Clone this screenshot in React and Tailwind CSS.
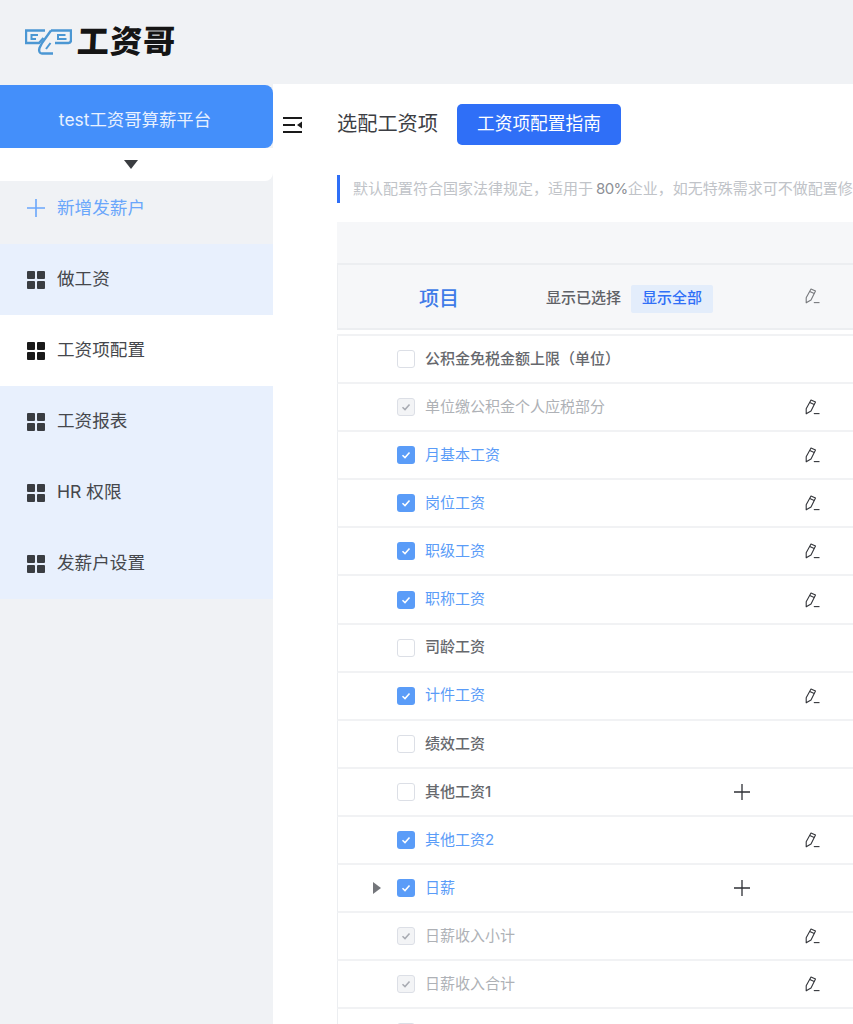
import React from 'react';

const FONT = { fontFamily: 'Inter, "Noto Sans CJK SC", sans-serif' };

const menus = [
  { label: '做工资' },
  { label: '工资项配置', active: true },
  { label: '工资报表' },
  { label: 'HR 权限' },
  { label: '发薪户设置' },
];

const rows = [
  { id: 1, label: '公积金免税金额上限（单位）', state: 'off' },
  { id: 2, label: '单位缴公积金个人应税部分', state: 'disabled', edit: true },
  { id: 3, label: '月基本工资', state: 'on', edit: true },
  { id: 4, label: '岗位工资', state: 'on', edit: true },
  { id: 5, label: '职级工资', state: 'on', edit: true },
  { id: 6, label: '职称工资', state: 'on', edit: true },
  { id: 7, label: '司龄工资', state: 'off' },
  { id: 8, label: '计件工资', state: 'on', edit: true },
  { id: 9, label: '绩效工资', state: 'off' },
  { id: 10, label: '其他工资1', state: 'off', add: true },
  { id: 11, label: '其他工资2', state: 'on', edit: true },
  { id: 12, label: '日薪', state: 'on', add: true, expand: true },
  { id: 13, label: '日薪收入小计', state: 'disabled', edit: true },
  { id: 14, label: '日薪收入合计', state: 'disabled', edit: true },
  { id: 15, label: '', state: 'disabled' },
];

const Logo = () => (
  <svg width="47" height="26" viewBox="0 0 47 26" fill="none" stroke="#4b97d3" strokeWidth="2.4">
    <path d="M20 1.5H1V14H14L18.5 9" />
    <path d="M13 6H6.5V10H11" strokeWidth="2" />
    <path d="M26 1.5H46V11C46 13 45 14 43.5 14H30" />
    <path d="M40.5 6H33V10H41.5" strokeWidth="2" />
    <path d="M26 1.5L17 14L14.5 19C13.5 22 14.5 24.5 17 24.5H28" />
    <path d="M25.5 14L21 20" strokeWidth="2" />
  </svg>
);

const GridIcon = ({ active }) => (
  <div className="grid grid-cols-2 gap-[2px] w-[18px] h-[18px]">
    {[0, 1, 2, 3].map((i) => (
      <span key={i} className={`rounded-[1px] ${active ? 'bg-[#1a1a1a]' : 'bg-[#3a3d42]'}`} />
    ))}
  </div>
);

const Pencil = ({ light }) => (
  <svg width="15" height="16" viewBox="0 0 15 16" fill="none" stroke={light ? '#77797d' : '#33353a'} strokeWidth="1.1">
    <path d="M6 1L10.5 3L6 12L1.2 14.8L1.2 9.8Z" strokeLinejoin="round" />
    <path d="M4.8 3.6L9.2 5.5" />
    <path d="M8.8 14.6H14.5" />
  </svg>
);

const Check = ({ color }) => (
  <svg width="12" height="12" viewBox="0 0 12 12" fill="none" stroke={color} strokeWidth="1.5">
    <path d="M2.5 6.2L5 8.6L9.5 3.4" />
  </svg>
);

const Checkbox = ({ state }) => {
  if (state === 'on') {
    return (
      <div className="w-[18px] h-[18px] rounded-[3px] bg-[#5a9cf8] flex items-center justify-center">
        <Check color="#ffffff" />
      </div>
    );
  }
  if (state === 'disabled') {
    return (
      <div className="w-[18px] h-[18px] rounded-[3px] bg-[#f3f4f6] border border-[#dcdfe6] flex items-center justify-center">
        <Check color="#a8abb2" />
      </div>
    );
  }
  return <div className="w-[18px] h-[18px] rounded-[3px] bg-white border border-[#dcdfe6]" />;
};

const labelColor = {
  on: 'text-[#5a9cf8]',
  off: 'text-[#66686d] font-medium',
  disabled: 'text-[#aeb1b6]',
};

const Row = ({ row }) => (
  <div className="grid grid-cols-[59px_28px_308px_72px_auto] items-center h-[48.1px] shrink-0 border-b-2 border-[#f1f2f4] border-l border-l-[#eceef1] box-border">
    <div className="flex justify-end pr-[16px]">
      {row.expand && <div className="w-0 h-0 border-y-[6px] border-y-transparent border-l-[8px] border-l-[#74767b]" />}
    </div>
    <Checkbox state={row.state} />
    <div className={`text-[15px] whitespace-nowrap ${labelColor[row.state]}`}>{row.label}</div>
    <div>
      {row.add && (
        <svg width="18" height="18" viewBox="0 0 18 18" stroke="#2f3136" strokeWidth="1.3">
          <path d="M9 1V17M1 9H17" />
        </svg>
      )}
    </div>
    <div>{row.edit && <Pencil />}</div>
  </div>
);

export default function App() {
  return (
    <div className="w-[853px] h-[1024px] overflow-hidden bg-[#f0f2f5] flex flex-col" style={FONT}>
      <header className="h-[84px] shrink-0 flex items-center pl-[25px] gap-[5px]">
        <Logo />
        <span className="text-[32px] leading-none font-black text-[#151515] -skew-x-3 tracking-[1px]">工资哥</span>
      </header>
      <div className="flex flex-1 min-h-0">
        <aside className="w-[273px] shrink-0">
          <div className="mt-[1px] h-[63px] rounded-r-lg bg-[#448ffa] flex items-center justify-center pt-[8px] pr-[3px] text-[17.4px] text-[#e8f1ff]">
            test工资哥算薪平台
          </div>
          <div className="h-[33px] rounded-br-lg bg-white flex justify-center pt-[12px] pr-[12px]">
            <div className="w-0 h-0 border-x-[7px] border-x-transparent border-t-[9px] border-t-[#3a3c40]" />
          </div>
          <div className="h-[63px] flex items-center pb-[9px] pl-[27px] gap-[12px] text-[17.6px] text-[#6aa6fb]">
            <svg width="18" height="18" viewBox="0 0 18 18" stroke="#6aa6fb" strokeWidth="1.6">
              <path d="M9 0V18M0 9H18" />
            </svg>
            新增发薪户
          </div>
          {menus.map((m) => (
            <div
              key={m.label}
              className={`h-[71px] flex items-center pl-[27px] gap-[12px] text-[17.6px] text-[#45474c] ${m.active ? 'bg-white' : 'bg-[#e8f0fd]'}`}
            >
              <GridIcon active={m.active} />
              {m.label}
            </div>
          ))}
        </aside>
        <main className="flex-1 min-w-0 bg-white flex">
          <div className="w-[64px] shrink-0 pt-[33px] pl-[10px]">
            <svg width="19" height="16" viewBox="0 0 19 16" fill="#1a1a1a">
              <rect x="0" y="0" width="19" height="2" />
              <rect x="0" y="7" width="12" height="2" />
              <rect x="0" y="14" width="19" height="2" />
              <path d="M19 4.5V11.5L14 8Z" />
            </svg>
          </div>
          <div className="flex-1 min-w-0 overflow-hidden">
            <div className="flex items-center gap-[19px] pt-[20px]">
              <h1 className="text-[20.2px] text-[#3c3e43] whitespace-nowrap">选配工资项</h1>
              <button className="w-[164px] h-[41px] rounded-[5px] bg-[#2f6ff7] text-white text-[17.7px] whitespace-nowrap">
                工资项配置指南
              </button>
            </div>
            <div className="mt-[30px] h-[28px] border-l-[3px] border-[#2f6ff7] pl-[13px] flex items-center text-[15px] text-[#c0c3c8] whitespace-nowrap">
              默认配置符合国家法律规定，适用于<span className="ml-[3px] tracking-[-0.6px] text-[#8d9096]">80%</span>企业，如无特殊需求可不做配置修
            </div>
            <div className="mt-[19px] h-[41px] bg-[#f6f7f9]" />
            <div className="grid grid-cols-[121px_162px_10px_82px_92px_auto] items-center h-[67px] pt-[4px] bg-[#f6f7f9] border-y-2 border-[#eceef1] border-l border-l-[#eceef1]">
              <div className="text-[20px] font-medium text-[#3f7ce8] text-right whitespace-nowrap">项目</div>
              <div className="text-[15px] font-medium text-[#5f6166] text-right whitespace-nowrap">显示已选择</div>
              <div />
              <div className="h-[28px] bg-[#e3edfb] rounded-[2px] flex items-center justify-center text-[15px] font-medium text-[#2f6ff7] whitespace-nowrap">
                显示全部
              </div>
              <div />
              <div className="mb-[6px]">
                <Pencil light />
              </div>
            </div>
            <div className="h-[6px] border-b-2 border-[#f1f2f4]" />
            {rows.map((r) => (
              <Row key={r.id} row={r} />
            ))}
          </div>
        </main>
      </div>
    </div>
  );
}
